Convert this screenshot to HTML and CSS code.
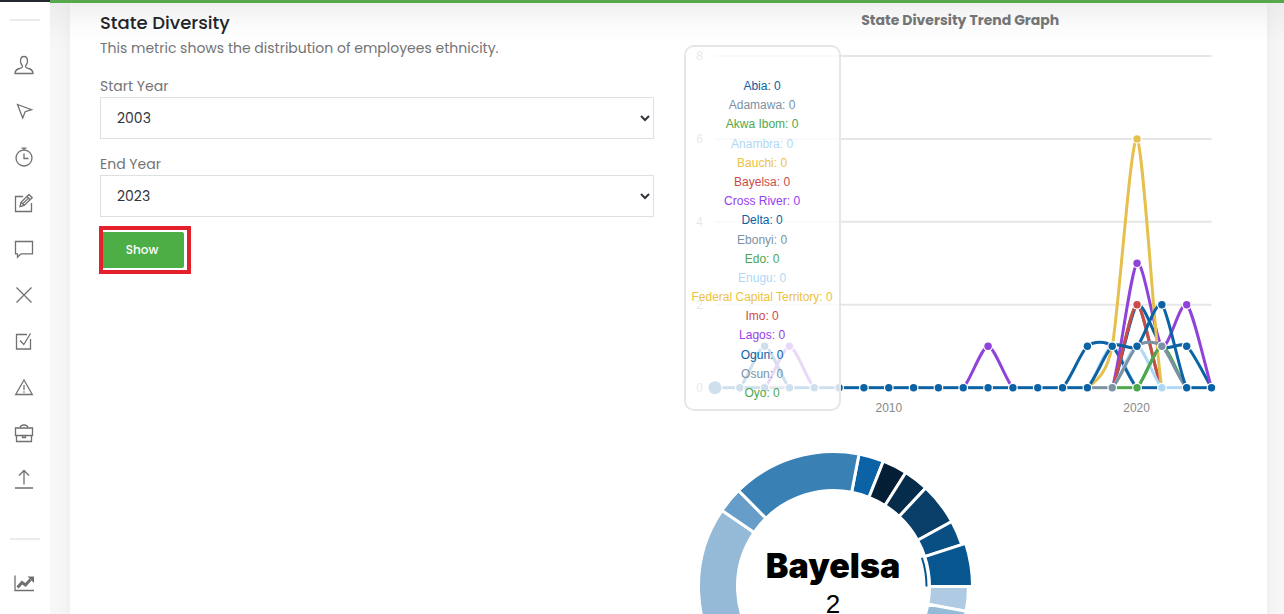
FILE: index.html
```html
<!DOCTYPE html>
<html lang="en">
<head>
<meta charset="utf-8">
<title>State Diversity</title>
<link rel="stylesheet" href="styles.css">
</head>
<body>
<div class="app">
  <nav class="sidebar" aria-label="Main">
    <hr class="divider">
    <a class="nav-link" href="#" aria-label="Profile"><svg class="icon" viewBox="0 0 20 20"><path d="M1 18.500h18c0-3.500-2-4.300-4.500-5-1.500-.5-2.800-.8-2.800-1.500v-1.400c1.300-1.200 1.800-2.600 1.800-4.600 0-3-1.200-4.500-3.500-4.500S6.500 3 6.500 6c0 2 .5 3.400 1.800 4.600V12c0 .7-1.300 1-2.800 1.500C3 14.200 1 15 1 18.500z"/></svg></a>
    <a class="nav-link" href="#" aria-label="Navigate"><svg class="icon" viewBox="0 0 20 20"><path d="M3.500 3.500l14 5.200-6.300 2-2.500 6.300z"/></svg></a>
    <a class="nav-link" href="#" aria-label="Time"><svg class="icon" viewBox="0 0 20 20"><circle cx="10" cy="11" r="8"/><path d="M7.500 1.200h5M10 1.200V3M10 6.500v5h4.500"/></svg></a>
    <a class="nav-link" href="#" aria-label="Edit"><svg class="icon" viewBox="0 0 20 20"><path d="M9 3.500H1.500v15h16V10M6 13.500l1-4.200 8-7.800 3.200 3.200-8 7.800zM13 3.500l3.200 3.200M7.300 9.500l3 2.800M9.200 10.300l6-5.700"/></svg></a>
    <a class="nav-link" href="#" aria-label="Messages"><svg class="icon" viewBox="0 0 20 20"><path d="M1.500 2.500h17v12.300H7l-3.500 3.400v-3.400h-2z"/></svg></a>
    <a class="nav-link" href="#" aria-label="Discipline"><svg class="icon" viewBox="0 0 20 20"><path d="M2.500 2.500l15 15M17.500 2.500l-15 15"/></svg></a>
    <a class="nav-link" href="#" aria-label="Tasks"><svg class="icon" viewBox="0 0 20 20"><path d="M13 3.500H2.500v14.500h14v-10M6 9.500l3.800 4L16.500 2.500"/></svg></a>
    <a class="nav-link" href="#" aria-label="Alerts"><svg class="icon" viewBox="0 0 20 20"><path d="M10 3l8.300 14.500H1.700zM10 8v5M10 14.300v1.500"/></svg></a>
    <a class="nav-link" href="#" aria-label="Jobs"><svg class="icon" viewBox="0 0 20 20"><path d="M1.500 5h17v7.500h-17zM2.500 12.500v6h15v-6M6 5c.5-4 7.500-4 8 0M8.500 12.500v2h3v-2"/></svg></a>
    <a class="nav-link" href="#" aria-label="Upload"><svg class="icon" viewBox="0 0 20 20"><path d="M1 19h18M10 15.500V1.500M5 6.500l5-5 5 5"/></svg></a>
    <hr class="divider divider-low">
    <a class="nav-link" href="#" aria-label="Analytics"><svg class="icon icon-chart" viewBox="0 0 22 20"><path d="M2 2.500v15h19"/><path class="trend" d="M4.500 14.500L9 9.500l3.500 2.500 5-5.500"/><path class="trend-head" d="M14.500 3.500H21V10z"/></svg></a>
  </nav>
  <main class="page">
    <section class="card">
      <div class="filters">
        <h1 class="title">State Diversity</h1>
        <p class="lead">This metric shows the distribution of employees ethnicity.</p>
        <form class="form">
          <label class="label" for="start">Start Year</label>
          <select class="select" id="start"><option>2003</option></select>
          <label class="label" for="end">End Year</label>
          <select class="select" id="end"><option>2023</option></select>
          <div class="highlight"><button class="button" type="button">Show</button></div>
        </form>
      </div>
      <div class="charts">
        <h2 class="chart-title">State Diversity Trend Graph</h2>
        <div class="trend-chart">
          <svg class="plot" id="plot" viewBox="0 0 554 380">
            <path class="grid-line" d="M31 21H528M31 104H528M31 187H528M31 270H528M31 353H528"/>
            <g class="axis-y"><text x="19" y="25">8</text><text x="19" y="108">6</text><text x="19" y="191">4</text><text x="19" y="274">2</text><text x="19" y="357">0</text></g>
            <g class="axis-x"><text x="205" y="377">2010</text><text x="453" y="377">2020</text></g>
          </svg>
          <div class="tooltip">
            <div class="tooltip-year"></div>
            <div class="blue">Abia: 0</div>
            <div class="gray">Adamawa: 0</div>
            <div class="green">Akwa Ibom: 0</div>
            <div class="sky">Anambra: 0</div>
            <div class="gold">Bauchi: 0</div>
            <div class="red">Bayelsa: 0</div>
            <div class="purple">Cross River: 0</div>
            <div class="blue">Delta: 0</div>
            <div class="gray">Ebonyi: 0</div>
            <div class="green">Edo: 0</div>
            <div class="sky">Enugu: 0</div>
            <div class="gold">Federal Capital Territory: 0</div>
            <div class="red">Imo: 0</div>
            <div class="purple">Lagos: 0</div>
            <div class="blue">Ogun: 0</div>
            <div class="gray">Osun: 0</div>
            <div class="green">Oyo: 0</div>
          </div>
        </div>
        <svg class="donut" viewBox="0 0 300 300">
          <g id="donut"></g>
          <text class="donut-name" x="149" y="141">Bayelsa</text>
          <text class="donut-value" x="149" y="176">2</text>
        </svg>
      </div>
    </section>
  </main>
</div>
<script src="charts.js"></script>
</body>
</html>
```
FILE: styles.css
```css
* { box-sizing: border-box; }
body {
  margin: 0;
  height: 100vh;
  overflow: hidden;
  background: #f7f7f7;
  color: #737476;
  font: 14px/20px Poppins, Inter, sans-serif;
}
.app { display: flex; height: 100vh; }
.sidebar {
  display: flex;
  flex-direction: column;
  align-items: stretch;
  flex: 0 0 50px;
  padding-top: 17px;
  background: #fff;
  border-top: 2px solid #24262d;
}
.divider { width: 30px; height: 2px; margin: 0 auto 21px; border: 0; background: #ebebeb; }
.divider-low { margin-top: 36px; margin-bottom: 20px; }
.nav-link { display: flex; align-items: center; justify-content: center; height: 46px; padding-right: 2px; }
.icon { width: 20px; height: 20px; fill: none; stroke: #707070; stroke-width: 1.3; }
.icon-chart { width: 22px; }
.trend { stroke-width: 3; }
.trend-head { fill: #707070; stroke: none; }
.page {
  flex: 1;
  padding: 0 17px 0 20px;
  border-top: 3px solid #55a84b;
  overflow: hidden;
  background: linear-gradient(#ececec, #f7f7f7 42px);
}
.card {
  display: grid;
  grid-template-columns: 1fr 1fr;
  gap: 30px;
  min-height: 100vh;
  padding: 8px 30px 0;
  background: linear-gradient(#f0f0f0, #fbfbfb 22px, #fff 42px);
  box-shadow: 0 0 16px rgba(0, 0, 0, .05);
}
.title { margin: 0; color: #212529; font-size: 18px; line-height: 24px; font-weight: 500; }
.lead { margin: 3px 0 18px; font-size: 14px; }
.form { display: flex; flex-direction: column; align-items: flex-start; }
.label { line-height: 20px; margin-bottom: 1px; }
.select {
  width: 100%;
  height: 42px;
  margin-bottom: 15px;
  padding: 0 2px 0 12px;
  border: 1px solid #dfe0e2;
  border-radius: 0;
  background: #fff;
  color: #32343c;
  font: 14px/20px Poppins, Inter, sans-serif;
}
.highlight {
  margin: -6px 0 0 -1px;
  padding: 2px 3px 2px 0;
  border: 4px solid #e3202b;
}
.button {
  display: block;
  width: 81px;
  height: 36px;
  padding: 0 3px 0 0;
  border: 0;
  border-radius: 0 2px 2px 0;
  background: #4cae45;
  color: #fff;
  font: 500 12px/20px Poppins, Inter, sans-serif;
}
.charts { min-width: 0; }
.chart-title { margin: 0 0 15px; font-size: 14px; line-height: 18px; font-weight: 700; text-align: center; }
.trend-chart { position: relative; margin-top: -9px; }
.plot { display: block; width: 100%; }
.grid-line { stroke: #e6e6e6; stroke-width: 2; }
.axis-y, .axis-x { fill: #888; font: 12px "Liberation Sans", sans-serif; }
.axis-y { text-anchor: end; }
.axis-x { text-anchor: middle; }
.line { fill: none; stroke-width: 3; }
.dot { stroke: #fff; stroke-width: 1; }
.tooltip {
  position: absolute;
  left: 0;
  top: 10px;
  padding: 6px;
  border: 2px solid #e6e6e6;
  border-radius: 10px;
  background: rgba(255, 255, 255, .8);
  text-align: center;
  white-space: nowrap;
  font: 12px/1.6 "Liberation Sans", sans-serif;
}
.tooltip-year { height: 24px; }
.blue { color: #0b62a4; }
.gray { color: #7a92a3; }
.green { color: #4da74d; }
.sky { color: #afd8f8; }
.gold { color: #edc240; }
.red { color: #cb4b4b; }
.purple { color: #9440ed; }
.donut { display: block; width: 300px; margin-top: 22px; }
.slice { stroke: #fff; stroke-width: 3; }
.slice-mark { fill: none; stroke-width: 2; }
.donut-name { font: 900 34px Inter, sans-serif; text-anchor: middle; }
.donut-value { font: 26px "Liberation Sans", sans-serif; text-anchor: middle; }
```
FILE: charts.js
```js
const NS = 'http://www.w3.org/2000/svg';
const add = (parent, name, attrs) => {
  const el = document.createElementNS(NS, name);
  for (const key in attrs) el.setAttribute(key, attrs[key]);
  parent.appendChild(el);
};

const blue = '#0b62a4', gray = '#7a92a3', green = '#4da74d', sky = '#afd8f8';
const gold = '#e6c04c', red = '#cb4b4b', purple = '#9043d9';

/* Non-zero counts per year; earlier series are drawn beneath later ones. */
const series = [
  { color: green, data: { 2021: 1 } },
  { color: sky, data: { 2019: 1 } },
  { color: green, data: { 2020: 2 } },
  { color: blue, data: { 2005: 1, 2018: 1, 2019: 1 } },
  { color: blue, data: { 2020: 2, 2021: 1, 2022: 1 } },
  { color: purple, data: { 2006: 1, 2014: 1, 2020: 3, 2021: 1, 2022: 2 } },
  { color: red, data: { 2020: 2 } },
  { color: gold, data: { 2019: 1, 2020: 6 } },
  { color: sky, data: { 2020: 1 } },
  { color: green, data: { 2021: 1 } },
  { color: gray, data: { 2020: 1, 2021: 1 } },
  { color: blue, data: { 2019: 1, 2020: 1, 2021: 2 } }
];
const bases = { 2005: gray, 2018: gray, 2019: green, 2021: sky };
const baseDots = { 2019: gray, 2020: green, 2021: sky };

const plot = document.getElementById('plot');
const base = 353;
const px = year => 31 + (year - 2003) * 24.85;
const py = value => base - value * 41.5;

for (let year = 2003; year < 2023; year++) {
  add(plot, 'path', { class: 'line', stroke: bases[year] || blue, d: `M${px(year)} ${base}H${px(year + 1)}` });
}
for (const s of series) {
  const at = year => s.data[year] || 0;
  const slope = year => (py(at(year + 1)) - py(at(year - 1))) / (2 * 24.85);
  const step = 24.85 / 4;
  for (let year = 2003; year < 2023; year++) {
    if (!at(year) && !at(year + 1)) continue;
    const c1 = Math.min(base, py(at(year)) + step * slope(year));
    const c2 = Math.min(base, py(at(year + 1)) - step * (year === 2022 ? (base - py(at(2022))) / 24.85 : slope(year + 1)));
    add(plot, 'path', {
      class: 'line', stroke: s.color,
      d: `M${px(year)} ${py(at(year))}C${px(year) + step} ${c1} ${px(year + 1) - step} ${c2} ${px(year + 1)} ${py(at(year + 1))}`
    });
  }
}
/* A white disc behind each marker separates it from the lines. */
const dot = (year, value, fill, r) => {
  add(plot, 'circle', { fill: '#fff', cx: px(year), cy: py(value), r: r + 1.2 });
  add(plot, 'circle', { fill, cx: px(year), cy: py(value), r });
};
for (let year = 2003; year <= 2023; year++) {
  dot(year, 0, baseDots[year] || blue, year === 2003 ? 6.5 : 3.7);
}
const peaks = [
  [2005, 1, blue], [2006, 1, purple], [2014, 1, purple], [2018, 1, blue], [2019, 1, blue],
  [2020, 1, blue], [2020, 2, red], [2020, 3, purple], [2020, 6, gold],
  [2021, 1, gray], [2021, 2, blue], [2022, 1, blue], [2022, 2, purple]
];
for (const [year, value, fill] of peaks) dot(year, value, fill, 3.7);

/* Donut slices: start angle, end angle (clockwise from the top), colour. */
const slices = [
  [10.9, 21.7, '#0b62a4'], [21.7, 32.4, '#041f35'], [32.4, 43.1, '#052c4a'],
  [43.1, 61.2, '#083e68'], [61.2, 71.9, '#094f84'], [90, 100.6, '#aecbe3'],
  [100.6, 140, '#95bbd9'], [140, 190, '#3a80b5'], [190, 230, '#679dc6'],
  [230, 304.3, '#95bad7'], [304.3, 315.3, '#679dc9'], [315.3, 370.9, '#3980b5'],
  [71.9, 90, '#08568f', 139]
];
const donut = document.getElementById('donut');
const point = (angle, r) => {
  const t = angle * Math.PI / 180;
  return `${149.5 + r * Math.sin(t)} ${149.5 - r * Math.cos(t)}`;
};
for (const [from, to, fill, outer = 135] of slices) {
  add(donut, 'path', {
    class: 'slice', fill,
    d: `M${point(from, 96)}L${point(from, outer)}A${outer} ${outer} 0 0 1 ${point(to, outer)}L${point(to, 96)}A96 96 0 0 0 ${point(from, 96)}Z`
  });
}
add(donut, 'path', { class: 'slice-mark', stroke: '#08568f', d: `M${point(72, 93)}A93 93 0 0 1 ${point(90, 93)}` });
```
